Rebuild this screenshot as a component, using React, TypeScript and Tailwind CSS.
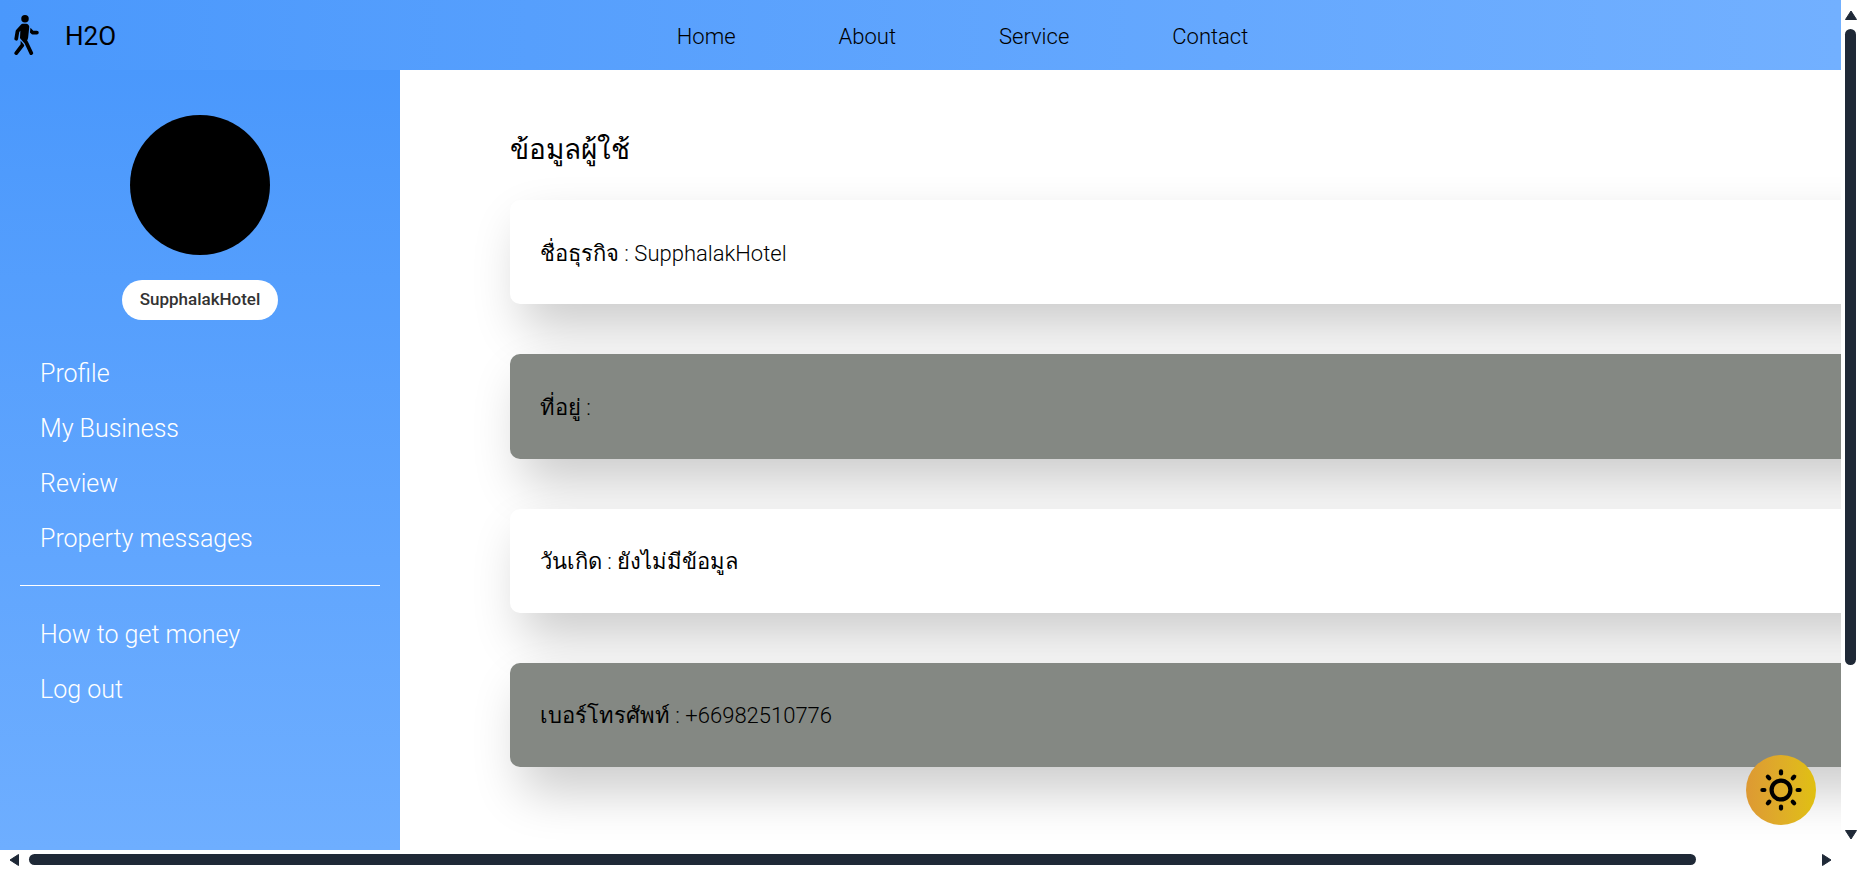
import { BsPersonWalking } from "react-icons/bs";

const navLinks = ["Home", "About", "Service", "Contact"];
const primaryLinks = ["Profile", "My Business", "Review", "Property messages"];
const secondaryLinks = ["How to get money", "Log out"];

const fields = [
  { label: "ชื่อธุรกิจ", value: "SupphalakHotel", tone: "bg-white" },
  { label: "ที่อยู่", value: "", tone: "bg-[#848883]" },
  { label: "วันเกิด", value: "ยังไม่มีข้อมูล", tone: "bg-white" },
  { label: "เบอร์โทรศัพท์", value: "+66982510776", tone: "bg-[#848883]" },
];

function SunIcon() {
  return (
    <svg viewBox="-21 -21 42 42" className="size-[42px]" fill="none" stroke="currentColor" strokeWidth="4.2" strokeLinecap="round" aria-hidden="true">
      <circle r="9.4" />
      {[0, 45, 90, 135, 180, 225, 270, 315].map((angle) => (
        <path key={angle} d="M0 -16.6V-18.6" transform={`rotate(${angle})`} />
      ))}
    </svg>
  );
}

function Arrow({ d, className }: { d: string; className: string }) {
  return (
    <svg viewBox="0 0 12 12" className={className} fill="currentColor" stroke="currentColor" strokeWidth="1" strokeLinejoin="round" aria-hidden="true">
      <path d={d} />
    </svg>
  );
}

function SideLinks({ items }: { items: string[] }) {
  return (
    <ul className="px-10">
      {items.map((item) => (
        <li key={item} className="h-[55px]">
          <a href="#" className="text-[25px] leading-9 text-white">{item}</a>
        </li>
      ))}
    </ul>
  );
}

export default function App() {
  return (
    <div className="grid h-screen grid-cols-[minmax(0,1fr)_19px] grid-rows-[minmax(0,1fr)_19px] bg-white font-['Roboto','Noto_Sans',sans-serif] font-light text-black">
      <div className="relative flex min-w-0 flex-col overflow-hidden">
        <header className="flex h-[70px] shrink-0 items-center bg-linear-to-r from-[#4a98fc] to-[#72b0ff] pr-8 pl-[5px]">
          <a href="#" className="flex items-center gap-5 text-[26px] font-normal">
            <BsPersonWalking className="size-10" />
            <span className="pt-[3px]">H2O</span>
          </a>
          <nav className="flex flex-1 justify-center gap-[103px] pt-[3px]">
            {navLinks.map((item) => (
              <a key={item} href="#" className="text-[22px]">{item}</a>
            ))}
          </nav>
        </header>
        <div className="flex min-h-0 flex-1">
          <aside className="flex w-[400px] shrink-0 flex-col bg-linear-to-b from-[#4a98fc] to-[#6eaeff] pt-[45px]">
            <div className="size-[140px] self-center rounded-full bg-black" />
            <p className="mt-[25px] mb-9 flex h-10 items-center self-center rounded-full bg-white px-[18px] text-[17px] font-medium text-[#333]">
              SupphalakHotel
            </p>
            <SideLinks items={primaryLinks} />
            <hr className="mx-5 mt-[9px] mb-[31px] border-white" />
            <SideLinks items={secondaryLinks} />
          </aside>
          <main className="min-w-0 flex-1 pt-[58px] pl-[110px]">
            <h1 className="text-[28px] leading-[44px]">ข้อมูลผู้ใช้</h1>
            <div className="mt-7 grid h-[567px] w-[1500px] auto-rows-fr gap-[50px]">
              {fields.map((field) => (
                <p key={field.label} className={`flex items-center rounded-[10px] px-[30px] pt-[2px] text-[22px] shadow-[12px_25px_50px_rgba(0,0,0,0.2)] ${field.tone}`}>
                  {field.label} : {field.value}
                </p>
              ))}
            </div>
          </main>
        </div>
        <button type="button" aria-label="Toggle light mode" className="absolute right-[25px] bottom-[25px] grid size-[70px] place-items-center rounded-full bg-linear-to-r from-[#dd9933] to-[#e0c010]">
          <SunIcon />
        </button>
      </div>
      <div className="flex flex-col items-center py-[9px] text-[#1f2937]">
        <Arrow d="M6 2L11.5 10.5H.5Z" className="size-3" />
        <div className="my-2 w-[11px] flex-1">
          <div className="h-[80.3%] rounded-full bg-[#1f2937]" />
        </div>
        <Arrow d="M6 10L11.5 1.5H.5Z" className="size-3" />
      </div>
      <div className="flex items-center px-2 text-[#1f2937]">
        <Arrow d="M2 6L10.5 .5V11.5Z" className="size-3" />
        <div className="mx-[9px] h-[11px] flex-1">
          <div className="h-full w-[93.5%] rounded-full bg-[#1f2937]" />
        </div>
        <Arrow d="M10 6L1.5 .5V11.5Z" className="size-3" />
      </div>
    </div>
  );
}
